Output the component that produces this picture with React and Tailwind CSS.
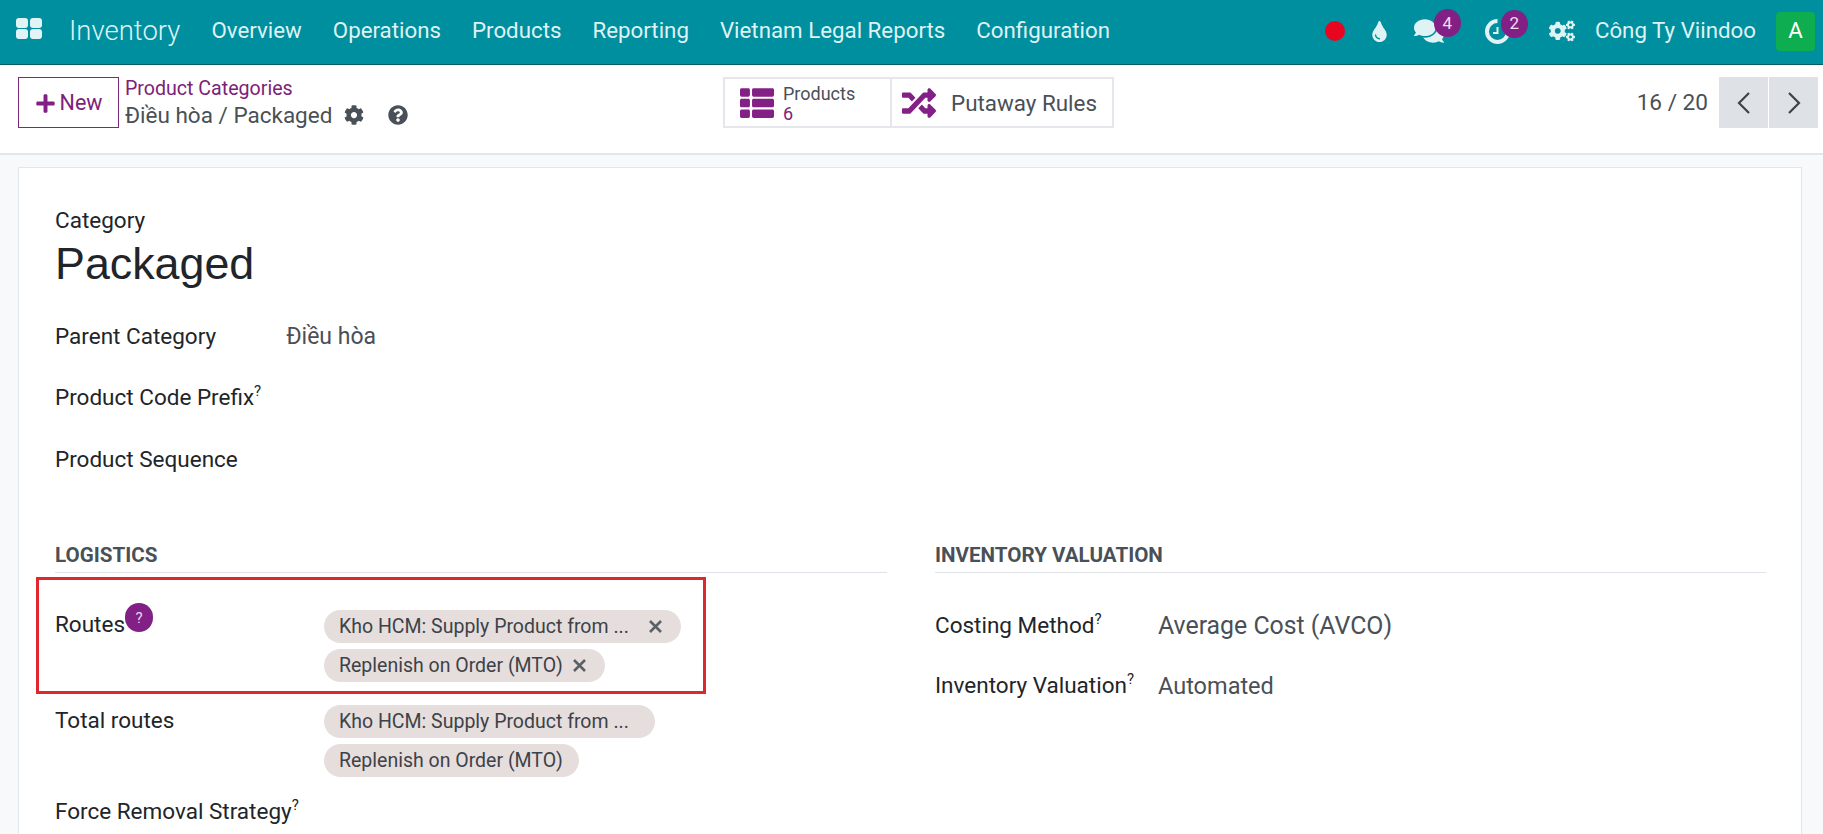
import React from "react";
import { FaTint, FaComments, FaCogs, FaCog, FaQuestionCircle, FaPlus, FaThList, FaRandom } from "react-icons/fa";

function Apps() {
  return (
    <svg width="26" height="21" viewBox="0 0 26 21" fill="#e2f3f5">
      <rect x="0" y="0" width="12" height="10" rx="3" />
      <rect x="14" y="0" width="12" height="10" rx="3" />
      <rect x="0" y="11" width="12" height="10" rx="3" />
      <rect x="14" y="11" width="12" height="10" rx="3" />
    </svg>
  );
}

function ClockIcon() {
  return (
    <svg width="25" height="25" viewBox="0 0 25 25" fill="none" stroke="#e2f3f5">
      <path d="M12.5 2 A10.5 10.5 0 1 0 23 12.5" strokeWidth="4" />
      <path d="M12.5 8 V14 H8" strokeWidth="2" />
    </svg>
  );
}

function Badge({ n, className }) {
  return (
    <span className={"absolute flex h-[28px] w-[27px] items-center justify-center rounded-full bg-[#832085] text-[17px] leading-none text-[#f0dff0] " + className}>
      {n}
    </span>
  );
}

function Sup() {
  return <sup className="relative -top-[9px] align-baseline text-[15px] leading-none text-[#212529]">?</sup>;
}

function CloseX({ className }) {
  return (
    <svg className={className} width="15" height="15" viewBox="0 0 15 15" fill="none" stroke="#5a6066" strokeWidth="2.6">
      <path d="M2 2 L13 13 M13 2 L2 13" />
    </svg>
  );
}

function Tag({ children, close, w }) {
  return (
    <span className={"flex h-[33px] items-center rounded-full bg-[#e6dedd] pl-[15px] text-[19.5px] text-[#3d4248] " + w}>
      <span className="whitespace-nowrap">{children}</span>
      {close && <CloseX className={close} />}
    </span>
  );
}

function Field({ label, sup, children, className }) {
  return (
    <div className={"flex items-center " + className}>
      <div className="text-[22.5px] leading-[30px] text-[#212529]">
        {label}
        {sup && <Sup />}
      </div>
      {children}
    </div>
  );
}

export default function App() {
  return (
    <div className="flex h-[834px] w-[1823px] flex-col overflow-hidden bg-[#f8f9fb] font-['Roboto',sans-serif]">
      <header className="flex h-[65px] shrink-0 items-center border-b border-[#0b5a63] bg-[#008f9e] pb-[2px] text-[22.3px] text-[#dff3f5]">
        <div className="ml-[16px] mr-[27px] -mt-[5px]"><Apps /></div>
        <div className="mr-[31px] text-[27.5px] font-light">Inventory</div>
        <nav className="flex gap-[31px]">
          <span>Overview</span>
          <span>Operations</span>
          <span>Products</span>
          <span>Reporting</span>
          <span>Vietnam Legal Reports</span>
          <span>Configuration</span>
        </nav>
        <div className="ml-auto flex items-center">
          <span className="mr-[24px] h-[20px] w-[20px] rounded-full bg-[#e8051f]" />
          <FaTint className="mr-[24px] text-[21px]" />
          <span className="relative mr-[41px] flex">
            <FaComments className="text-[30px]" />
            <Badge n="4" className="-top-[7px] left-[20px]" />
          </span>
          <span className="relative mr-[39px] flex">
            <ClockIcon />
            <Badge n="2" className="-top-[9px] left-[16px]" />
          </span>
          <FaCogs className="mr-[20px] text-[26px]" />
          <span className="mr-[20px]">Công Ty Viindoo</span>
          <span className="mr-[8px] flex h-[39px] w-[39px] items-center justify-center rounded-[4px] bg-[#0ead4f] text-white">A</span>
        </div>
      </header>

      <div className="flex h-[90px] shrink-0 items-start border-b-2 border-[#e3e6ec] bg-white pt-[12px]">
        <button className="ml-[18px] flex h-[51px] w-[101px] items-center justify-center gap-[4px] border border-[#7c2a78] pt-[1px] text-[21.5px] text-[#7c2278]">
          <FaPlus className="text-[21px] text-[#832085]" />
          New
        </button>
        <div className="ml-[6px] w-[598px] leading-none">
          <div className="mt-[1px] text-[19.6px] leading-[22px] text-[#7c2278]">Product Categories</div>
          <div className="mt-[1px] flex items-center text-[22.5px] leading-[28px] text-[#495057]">
            Điều hòa / Packaged
            <FaCog className="ml-[12px] text-[20px]" />
            <FaQuestionCircle className="ml-[24px] text-[20px]" />
          </div>
        </div>
        <div className="flex h-[51px] border-2 border-[#e6e7ec]">
          <div className="flex w-[167px] items-center border-r-2 border-[#e6e7ec] pl-[15px]">
            <FaThList className="text-[34px] text-[#832085]" />
            <div className="ml-[9px] pt-[2px] leading-none">
              <div className="text-[18px] leading-[20px] text-[#495057]">Products</div>
              <div className="text-[18px] leading-[20px] text-[#7c2278]">6</div>
            </div>
          </div>
          <div className="flex w-[220px] items-center pl-[10px]">
            <FaRandom className="text-[34px] text-[#832085]" />
            <span className="ml-[15px] pt-[2px] text-[22.4px] text-[#495057]">Putaway Rules</span>
          </div>
        </div>
        <div className="ml-auto mr-[5px] flex items-center">
          <span className="mr-[11px] text-[22.6px] text-[#495057]">16 / 20</span>
          <span className="flex h-[51px] w-[49px] items-center justify-center bg-[#dee2e6]">
            <svg width="16" height="24" viewBox="0 0 16 24" fill="none" stroke="#3d4248" strokeWidth="2.2"><path d="M13 2 L3 12 L13 22" /></svg>
          </span>
          <span className="ml-[1px] flex h-[51px] w-[49px] items-center justify-center bg-[#dee2e6]">
            <svg width="16" height="24" viewBox="0 0 16 24" fill="none" stroke="#3d4248" strokeWidth="2.2"><path d="M3 2 L13 12 L3 22" /></svg>
          </span>
        </div>
      </div>

      <main className="relative mx-[18px] mt-[12px] h-[800px] w-[1784px] shrink-0 border border-[#e3e6ec] bg-white pl-[36px] pr-[36px] pt-[39px]">
        <div className="text-[22.5px] leading-[27px] text-[#212529]">Category</div>
        <h1 className="font-['Liberation_Sans',sans-serif] text-[44.8px] leading-[58px] text-[#212529]">Packaged</h1>
        <div className="mt-[30px] h-[61px]">
          <Field label="Parent Category" className="h-[27px]">
            <span className="ml-[70px] mt-[2px] text-[23px] leading-[30px] text-[#495057]">Điều hòa</span>
          </Field>
        </div>
        <Field label="Product Code Prefix" sup className="h-[27px]" />
        <Field label="Product Sequence" className="mt-[35px] h-[27px]" />

        <div className="mt-[70px] grid grid-cols-[832px_831px] gap-x-[48px]">
          <section>
            <h2 className="h-[31px] border-b border-[#dfe2e6] text-[20.6px] font-bold leading-[26px] text-[#495057]">LOGISTICS</h2>
            <div className="mt-[37px] flex">
              <div className="relative h-[39px] w-[269px] shrink-0 text-[22.5px] leading-[28px] text-[#212529]">
                Routes
                <span className="absolute -top-[7px] left-[70px] flex h-[29px] w-[28px] items-center justify-center rounded-full bg-[#832085] text-[15px] text-[#e9d7ea]">?</span>
              </div>
              <div className="flex flex-col gap-[6px]">
                <Tag close="ml-[19px]" w="w-[357px]">Kho HCM: Supply Product from ...</Tag>
                <Tag close="ml-[9px]" w="w-[281px]">Replenish on Order (MTO)</Tag>
              </div>
            </div>
            <div className="mt-[23px] flex">
              <div className="w-[269px] shrink-0 text-[22.5px] leading-[30px] text-[#212529]">Total routes</div>
              <div className="flex flex-col gap-[6px]">
                <Tag w="w-[331px]">Kho HCM: Supply Product from ...</Tag>
                <Tag w="w-[255px]">Replenish on Order (MTO)</Tag>
              </div>
            </div>
            <Field label="Force Removal Strategy" sup className="mt-[19px]" />
          </section>
          <section>
            <h2 className="h-[31px] border-b border-[#dfe2e6] text-[20.6px] font-bold leading-[26px] text-[#495057]">INVENTORY VALUATION</h2>
            <div className="mt-[37px] flex flex-col gap-[29px]">
              <div className="flex h-[32px] items-center">
                <div className="mb-[2px] w-[223px] shrink-0 text-[22.5px] leading-[30px] text-[#212529]">Costing Method<Sup /></div>
                <span className="text-[24.85px] text-[#495057]">Average Cost (AVCO)</span>
              </div>
              <div className="flex h-[32px] items-center">
                <div className="mb-[4px] w-[223px] shrink-0 text-[22.5px] leading-[30px] text-[#212529]">Inventory Valuation<Sup /></div>
                <span className="text-[23.5px] text-[#495057]">Automated</span>
              </div>
            </div>
          </section>
        </div>

        <div className="absolute left-[17px] top-[409px] h-[117px] w-[670px] border-[3px] border-[#e0262f]" />
      </main>
    </div>
  );
}
